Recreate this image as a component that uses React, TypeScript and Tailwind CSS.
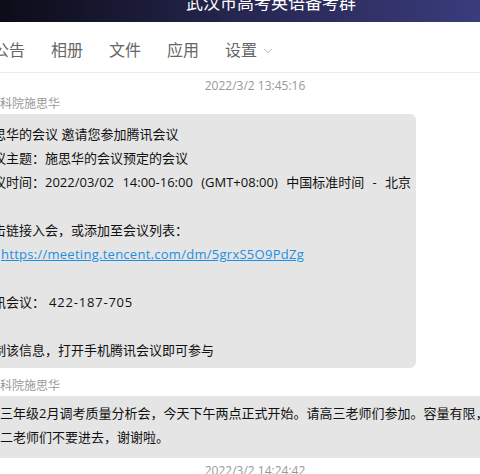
import React from 'react';
import { ChevronDown } from 'lucide-react';

const cjk = { fontFamily: '"Open Sans", "Noto Sans CJK SC", sans-serif' };

const tabs = ['公告', '相册', '文件', '应用'];

const Blank = () => <div className="h-[24px]" />;

export default function App() {
  return (
    <div className="w-[480px] h-[474px] overflow-hidden bg-white" style={cjk}>
      {/* window title */}
      <div className="h-[22px] overflow-hidden bg-gradient-to-r from-[#0c0c18] via-[#262650] to-[#3a3c7c] flex justify-center pl-[62px]">
        <span className="text-white text-[17px] leading-[17px] mt-[-6px] whitespace-nowrap">武汉市高考英语备考群</span>
      </div>

      {/* tabs */}
      <div className="h-[51px] border-b border-[#ebebeb] flex items-center pt-[6px]">
        <div className="flex items-center gap-[26px] ml-[-7px] text-[16px] text-[#666]">
          {tabs.map((t) => (
            <span key={t} className="whitespace-nowrap">{t}</span>
          ))}
          <span className="flex items-center gap-[4px] whitespace-nowrap">
            设置
            <ChevronDown size={14} strokeWidth={1.25} className="text-[#999] mt-[2px]" />
          </span>
        </div>
      </div>

      {/* messages */}
      <div className="text-[12px] leading-[16px] text-[#999] text-center pl-[30px] mt-[5px]">2022/3/2 13:45:16</div>
      <div className="text-[12px] leading-[16px] text-[#999] ml-[-12px] mt-[2px] whitespace-nowrap">教科院施思华</div>
      <div className="ml-[-30px] w-[446px] mt-[2px] bg-[#e5e5e5] rounded-[6px] pl-[10px] pr-[7px] pt-[8px] pb-[6px] text-[13px] leading-[24px] text-[#111] whitespace-nowrap">
        <div>施思华的会议 邀请您参加腾讯会议</div>
        <div>会议主题：施思华的会议预定的会议</div>
        <div className="[word-spacing:5px]">会议时间：2022/03/02 14:00-16:00 (GMT+08:00) 中国标准时间 - 北京</div>
        <Blank />
        <div>点击链接入会，或添加至会议列表：</div>
        <div className="pl-[21px]">
          <span className="text-[#1d8fe1] underline tracking-[0.27px]">https://meeting.tencent.com/dm/5grxS5O9PdZg</span>
        </div>
        <Blank />
        <div>
          腾讯会议：<span className="ml-[4px] tracking-[0.8px]">422-187-705</span>
        </div>
        <Blank />
        <div>复制该信息，打开手机腾讯会议即可参与</div>
      </div>

      <div className="text-[12px] leading-[16px] text-[#999] ml-[-12px] mt-[10px] whitespace-nowrap">教科院施思华</div>
      <div className="ml-[-23px] w-[540px] mt-[2px] bg-[#e5e5e5] rounded-[6px] pl-[10px] pt-[5px] pb-[9px] text-[13px] leading-[24px] text-[#111] whitespace-nowrap">
        <div>高三年级2月调考质量分析会，今天下午两点正式开始。请高三老师们参加。容量有限，</div>
        <div>高二老师们不要进去，谢谢啦。</div>
      </div>
      <div className="text-[12px] leading-[16px] text-[#999] text-center pl-[30px] mt-[5px]">2022/3/2 14:24:42</div>
    </div>
  );
}
